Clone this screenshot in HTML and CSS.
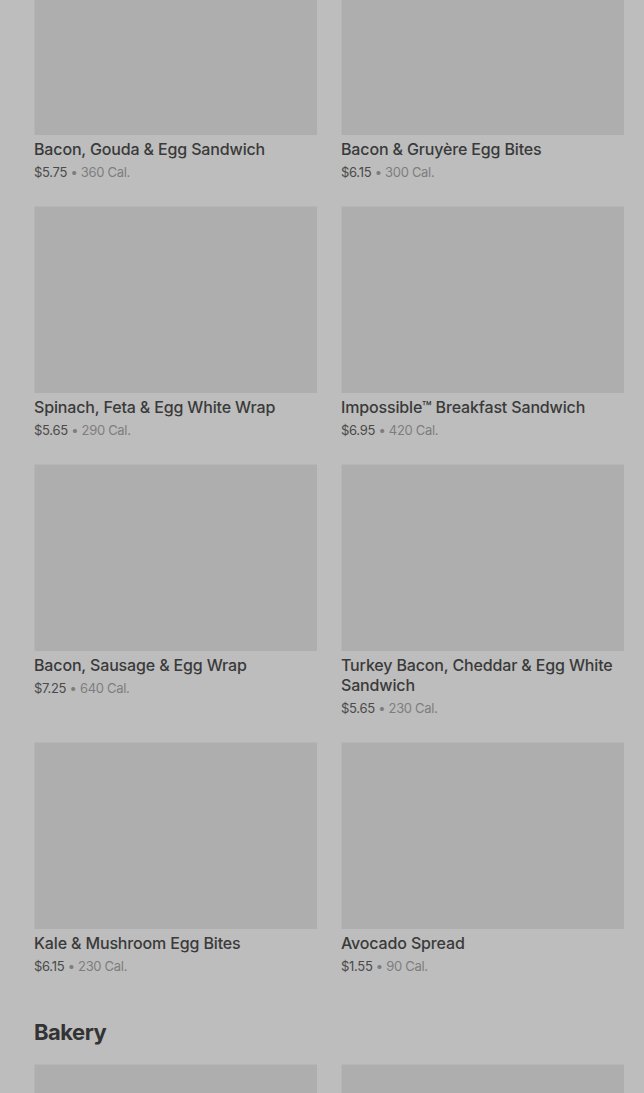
FILE: index.html
```html
<!DOCTYPE html>
<html lang="en">
<head>
    <meta charset="UTF-8">
    <meta name="viewport" content="width=device-width, initial-scale=1.0">
    <title>Menu - Hot Breakfast</title>
    <link rel="stylesheet" href="styles.css">
</head>
<body>
    <div class="menu">
        <div class="grid grid-first">
            <div class="item">
                <div class="thumb"></div>
                <div class="name">Bacon, Gouda &amp; Egg Sandwich</div>
                <div class="meta"><span class="price">$5.75</span> <span class="cal">• 360 Cal.</span></div>
            </div>
            <div class="item">
                <div class="thumb"></div>
                <div class="name">Bacon &amp; Gruyère Egg Bites</div>
                <div class="meta"><span class="price">$6.15</span> <span class="cal">• 300 Cal.</span></div>
            </div>
            <div class="item">
                <div class="thumb"></div>
                <div class="name">Spinach, Feta &amp; Egg White Wrap</div>
                <div class="meta"><span class="price">$5.65</span> <span class="cal">• 290 Cal.</span></div>
            </div>
            <div class="item">
                <div class="thumb"></div>
                <div class="name">Impossible™ Breakfast Sandwich</div>
                <div class="meta"><span class="price">$6.95</span> <span class="cal">• 420 Cal.</span></div>
            </div>
            <div class="item">
                <div class="thumb"></div>
                <div class="name">Bacon, Sausage &amp; Egg Wrap</div>
                <div class="meta"><span class="price">$7.25</span> <span class="cal">• 640 Cal.</span></div>
            </div>
            <div class="item">
                <div class="thumb"></div>
                <div class="name">Turkey Bacon, Cheddar &amp; Egg White Sandwich</div>
                <div class="meta"><span class="price">$5.65</span> <span class="cal">• 230 Cal.</span></div>
            </div>
            <div class="item">
                <div class="thumb"></div>
                <div class="name">Kale &amp; Mushroom Egg Bites</div>
                <div class="meta"><span class="price">$6.15</span> <span class="cal">• 230 Cal.</span></div>
            </div>
            <div class="item">
                <div class="thumb"></div>
                <div class="name">Avocado Spread</div>
                <div class="meta"><span class="price">$1.55</span> <span class="cal">• 90 Cal.</span></div>
            </div>
        </div>

        <h2 class="section-title">Bakery</h2>
        <div class="grid">
            <div class="item">
                <div class="thumb"></div>
            </div>
            <div class="item">
                <div class="thumb"></div>
            </div>
        </div>
    </div>
</body>
</html>
```

FILE: styles.css
```css
body {
    margin: 0;
    background-color: #bdbdbd;
    font-family: Inter, "Noto Sans", sans-serif;
    color: #3a3a3a;
    overflow: hidden;
}

.menu {
    padding: 0 20px 0 34px;
}

.grid {
    display: grid;
    grid-template-columns: 1fr 1fr;
    column-gap: 24px;
    row-gap: 24px;
}

.grid-first {
    margin-top: -52px;
}

.thumb {
    height: 187px;
    background-color: #aeaeae;
    border-top: 1px solid #b6b6b6;
    border-left: 1px solid #b6b6b6;
    box-sizing: border-box;
}

.name {
    margin-top: 4px;
    font-size: 16px;
    font-weight: 500;
    line-height: 20px;
    letter-spacing: -0.15px;
    color: #3a3a3a;
}

.meta {
    margin-top: 3px;
    font-size: 13px;
    line-height: 20px;
    letter-spacing: -0.3px;
}

.price {
    color: #4a4a4a;
}

.cal {
    color: #7d7d7d;
}

.section-title {
    margin: 44px 0 20px;
    font-size: 22px;
    font-weight: 700;
    line-height: 24px;
    letter-spacing: -0.5px;
    color: #333;
}
```
